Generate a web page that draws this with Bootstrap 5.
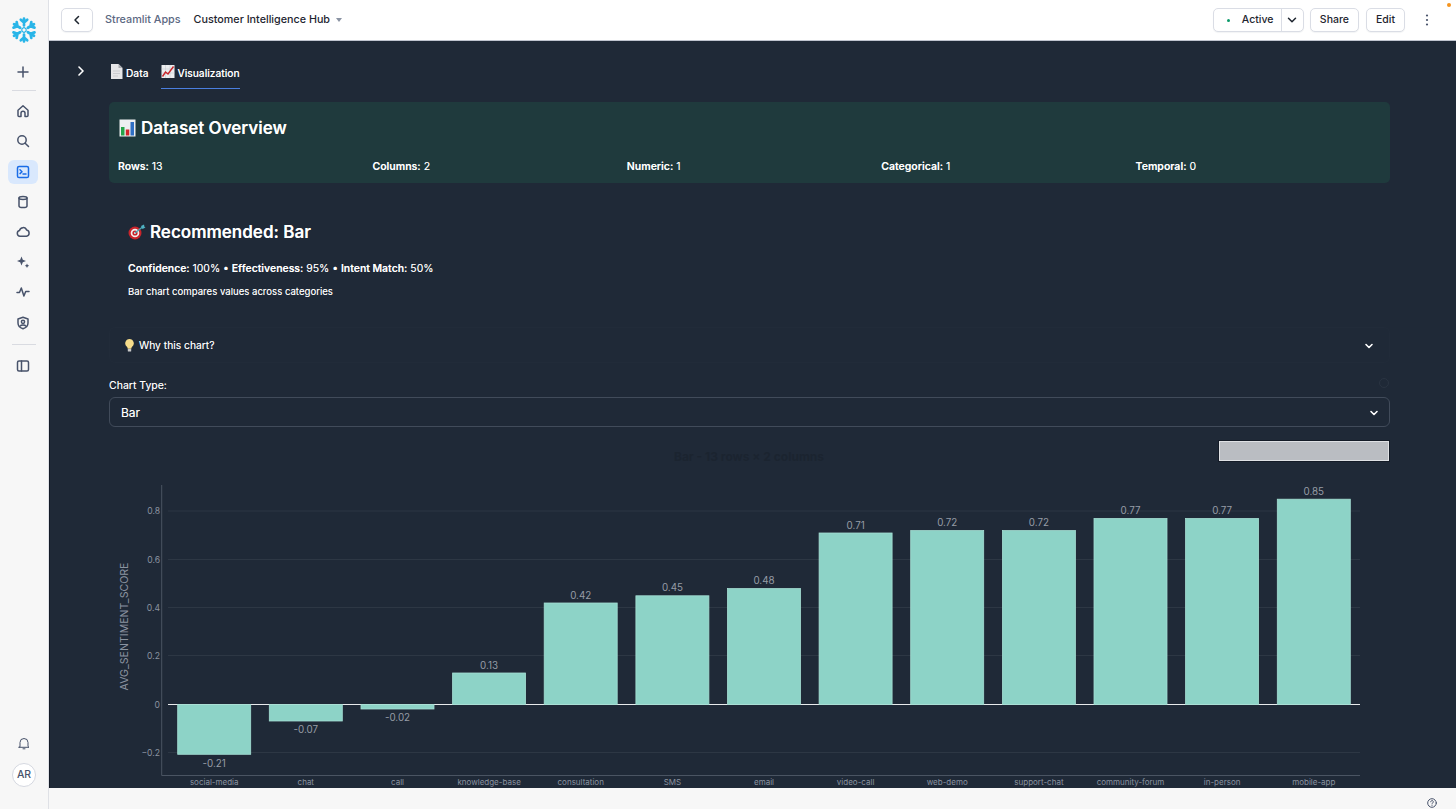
<!DOCTYPE html>
<html lang="en">
<head>
<meta charset="utf-8">
<title>Customer Intelligence Hub</title>
<link href="https://cdn.jsdelivr.net/npm/bootstrap@5.3.0/dist/css/bootstrap.min.css" rel="stylesheet">
<style>
html,body{height:100%;overflow:hidden}
body{font-family:Inter,"Liberation Sans",sans-serif;background:#f7f7f7;color:#1e252f}
.ic{fill:none;stroke:#48536b;stroke-width:1.5;stroke-linecap:round;stroke-linejoin:round;display:block}
.ic-w{stroke:#fff;stroke-width:1.6}
.ic-d{stroke:#1e252f}
.ic-thin{stroke-width:1}
.rail{width:49px;flex:none;background:#f7f7f7;border-right:1px solid #dfe1e6;height:809px;padding-top:17px}
.rail-logo{margin-bottom:17px}
.rail-btn{width:30px;height:24px;border-radius:6px;margin:0 2px 6.2px 0;display:flex;align-items:center;justify-content:center}
.rail-btn.on{background:#d9e8fd}
.rail-btn.on .ic{stroke:#1a6ce7}
.rail-rule{width:24px;height:1px;background:#d9dbe1;margin:0 0 8px}
.rail-rule.low{margin:3px 0 9px}
.avatar{width:24px;height:24px;border-radius:50%;border:1px solid #d5d8e0;background:#fff;color:#48536b;font-size:10.5px;font-weight:500;display:flex;align-items:center;justify-content:center;margin:13px 0 22px}
.topbar{height:41px;background:#fff;border-bottom:1px solid #bfc4cf;padding:0 19px 0 12px;position:relative}
.tb-btn{height:24px;border:1px solid #dadde5;border-radius:5px;background:#fff;font-size:10.5px;font-weight:500;color:#1e252f;padding:0 9px;display:flex;align-items:center;box-shadow:0 1px 1px rgba(20,30,50,.05)}
.tb-back{width:32px;justify-content:center;padding:0;margin-right:12px}
.crumb{font-size:10.8px;font-weight:500;color:#5b6882;margin-right:13px}
.crumb-now{font-size:10.75px;font-weight:500;color:#1e252f}
.caret{width:0;height:0;border-left:3.5px solid transparent;border-right:3.5px solid transparent;border-top:4px solid #8a93a3;margin-left:6px}
.grp{width:91px;padding:0;margin-right:6px}
.grp-a{width:68px;height:100%;border-right:1px solid #dadde5;display:flex;align-items:center;padding-left:13px}
.grp-dot{width:3px;height:3px;background:#0a9a6a;border-radius:50%;margin-right:12px}
.grp-b{flex:1;display:flex;align-items:center;justify-content:center}
.tb-share{margin-right:7px}
.tb-edit{margin-right:20px}
.orange{position:absolute;top:3px;right:5px;width:4px;height:4px;border-radius:50%;background:#f5941e}
.stage{height:747px;background:#1f2937;border-left:1px solid #141b27;overflow:hidden;color:#fff;padding-left:59px;position:relative;text-shadow:0 0 .4px rgba(255,255,255,.5)}
.stage-inner{width:1281px}
.expand{position:absolute;left:26px;top:25px}
.tabs-row{height:48px;padding-top:19px;gap:13px;font-size:10.2px;font-weight:500;margin-bottom:13px}
.tabx{height:29px;display:flex;align-items:flex-start;gap:3px;padding-top:6px;padding-left:1px}
.tabx.on{border-bottom:1px solid #4a7fe0;padding-left:0;gap:2px}
.tabx svg{margin-top:-2px}
.overview{height:81px;background:#1f3a3d;border-radius:5px;padding:15px 0 0 9px;margin-bottom:38px}
.h-big{font-size:17px;font-weight:600;line-height:22px;margin:0;display:flex;align-items:center;gap:5px}
.h-over{padding-left:1px}
.h-tight{gap:4px}
.stats{display:grid;grid-template-columns:repeat(5,254.4px);font-size:10.5px;margin-top:21px;line-height:13px}
.stats b,.metrics b{font-weight:600}
.reco{padding-left:19px;height:106px}
.metrics{font-size:10.4px;line-height:13px;margin:19px 0 0}
.why-note{font-size:9.6px;line-height:12px;margin:11px 0 0}
.why{height:36px;border:1px solid #212b39;border-radius:6px;padding:1px 15px 0;margin-bottom:16px;font-size:10.3px;font-weight:400}
.why-lab{gap:5px}
.lbl{font-size:10.5px;line-height:13px;margin-bottom:5px;position:relative}
.help-faint{position:absolute;right:1px;top:-1px;width:10px;height:10px;border:1px solid #2a3442;border-radius:50%}
.pick{height:30px;border:1px solid #414b5a;border-radius:6px;padding:1px 10px 0 11px;font-size:12px;margin-bottom:13px}
.chart-head{display:grid;grid-template-columns:1fr auto 1fr;grid-template-rows:22px;align-items:start;padding-right:1px}
.chart-title{font-size:12px;line-height:16px;font-weight:700;color:#1b2430;text-shadow:none;margin-top:9px}
.shot-btn{justify-self:end;width:170px;height:20px;margin-top:1px;background:#babdc2;border:1px solid #dfe1e4;box-shadow:0 0 0 1px #141b27}
.plot{display:block;position:relative;font-family:Inter,"Liberation Sans",sans-serif;text-shadow:none}
.plot .tk{font-size:8.6px;fill:#8b93a0;text-anchor:end}
.plot .xk{font-size:8px;fill:#8b93a0;text-anchor:middle}
.plot .dv{font-size:9.8px;fill:#969ca6;text-anchor:middle}
.plot .ttl{font-size:10.6px;fill:#8b93a0;text-anchor:middle}
.plot .gl{stroke:#2d3744;stroke-width:1}
.plot .br{fill:#8dd3c7;stroke:#a6dfd4;stroke-width:.8}
.foot{height:21px;background:#f7f7f7;position:relative}
.foot-help{position:absolute;right:19px;top:10px}
</style>
</head>
<body class="d-flex">
<aside class="rail d-flex flex-column align-items-center">
  <svg class="rail-logo" width="26" height="26" viewBox="-13 -13 26 26" fill="none" stroke="#29b5e8" stroke-width="2.700" stroke-linecap="round" stroke-linejoin="round">
    <g id="arm"><path d="M0-4.500V-11.500M-3.200-10.300 0-7.500 3.200-10.300"/></g>
    <use href="#arm" transform="rotate(60)"/><use href="#arm" transform="rotate(120)"/><use href="#arm" transform="rotate(180)"/><use href="#arm" transform="rotate(240)"/><use href="#arm" transform="rotate(300)"/>
    <path d="M0-2.400 2.100-1.200V1.200L0 2.400-2.100 1.200V-1.200Z" stroke-width="1.200"/>
  </svg>
  <div class="rail-btn"><svg class="ic" width="14" height="14" viewBox="0 0 14 14"><path d="M7 2v10M2 7h10"/></svg></div>
  <div class="rail-rule"></div>
  <div class="rail-btn"><svg class="ic" width="14" height="14" viewBox="0 0 14 14"><path d="M2 6.200 7 1.800l5 4.400v5.200a1 1 0 0 1-1 1H9V9.200a2 2 0 0 0-4 0v3.200H3a1 1 0 0 1-1-1Z"/></svg></div>
  <div class="rail-btn"><svg class="ic" width="14" height="14" viewBox="0 0 14 14"><circle cx="6" cy="6" r="4.200"/><path d="m9.200 9.200 3.300 3.300"/></svg></div>
  <div class="rail-btn on"><svg class="ic" width="14" height="14" viewBox="0 0 14 14"><rect x="1.500" y="1.500" width="11" height="11" rx="1.600"/><path d="m4 4.800 2 1.900-2 1.900M7 9h3"/></svg></div>
  <div class="rail-btn"><svg class="ic" width="14" height="14" viewBox="0 0 14 14"><ellipse cx="7" cy="3" rx="4" ry="1.500"/><path d="M3 3v8c0 .9 1.800 1.600 4 1.600s4-.7 4-1.600V3"/></svg></div>
  <div class="rail-btn"><svg class="ic" width="14" height="14" viewBox="0 0 14 14"><path d="M4 11.200a2.900 2.900 0 0 1-.5-5.700 3.700 3.700 0 0 1 7.100-.4 3.100 3.100 0 0 1-.1 6.100Z"/></svg></div>
  <div class="rail-btn"><svg width="14" height="14" viewBox="0 0 14 14" fill="#48536b"><path d="M5.500 1.500 6.800 4.800 10 6 6.800 7.300 5.500 10.500 4.200 7.300 1 6 4.200 4.800ZM11 8.500l.7 1.600 1.500.7-1.500.6-.7 1.600-.7-1.600-1.500-.6 1.500-.7Z"/></svg></div>
  <div class="rail-btn"><svg class="ic" width="14" height="14" viewBox="0 0 14 14"><path d="M1 7.500h2.500L5.300 3l2.600 8 1.800-4.500H13"/></svg></div>
  <div class="rail-btn"><svg class="ic" width="14" height="14" viewBox="0 0 14 14"><path d="M7 1.300 12 3v4c0 3-2.200 4.800-5 5.700C4.200 11.800 2 10 2 7V3Z"/><circle cx="7" cy="5.800" r="1.600"/><path d="M4.300 10c.6-1.200 4.800-1.200 5.400 0"/></svg></div>
  <div class="rail-rule low"></div>
  <div class="rail-btn"><svg class="ic" width="14" height="14" viewBox="0 0 14 14"><rect x="1.500" y="2" width="11" height="10" rx="1.500"/><path d="M5.500 2v10"/></svg></div>
  <div class="mt-auto d-flex flex-column align-items-center">
    <svg class="ic ic-thin" width="14" height="14" viewBox="0 0 14 14"><path d="M3 10.500V6.500a4 4 0 0 1 8 0v4l1 .8H2ZM6 12.800h2"/></svg>
    <div class="avatar">AR</div>
  </div>
</aside>
<div class="flex-grow-1 d-flex flex-column min-w-0">
  <header class="topbar d-flex align-items-center">
    <span class="tb-btn tb-back"><svg class="ic ic-d" width="10" height="10" viewBox="0 0 10 10"><path d="M6.500 1.500 3 5l3.500 3.500"/></svg></span>
    <span class="crumb">Streamlit Apps</span>
    <span class="crumb-now">Customer Intelligence Hub</span>
    <span class="caret"></span>
    <div class="ms-auto d-flex align-items-center">
      <div class="tb-btn grp"><span class="grp-a"><span class="grp-dot"></span>Active</span><span class="grp-b"><svg class="ic ic-d" width="10" height="10" viewBox="0 0 10 10"><path d="M1.500 3.200 5 6.700l3.500-3.500"/></svg></span></div>
      <span class="tb-btn tb-share">Share</span>
      <span class="tb-btn tb-edit">Edit</span>
      <svg width="4" height="12" viewBox="0 0 4 12" fill="#48536b"><circle cx="2" cy="1.500" r="1.100"/><circle cx="2" cy="6" r="1.100"/><circle cx="2" cy="10.500" r="1.100"/></svg>
      <span class="ms-2"></span>
    </div>
    <span class="orange"></span>
  </header>
  <main class="stage">
    <svg class="ic ic-w expand" width="10" height="10" viewBox="0 0 10 10"><path d="M3 1 7 5 3 9"/></svg>
    <div class="stage-inner">
      <div class="tabs-row d-flex">
        <div class="tabx">
          <svg width="13" height="15" viewBox="0 0 13 15"><path d="M1 0h7.500L12.500 4v11H1Z" fill="#e6e6e8"/><path d="M8.500 0v4h4Z" fill="#a9abb0"/><path d="M3 7h7M3 9.500h7M3 12h5" stroke="#c5c6ca" stroke-width=".8"/></svg>
          <span>Data</span>
        </div>
        <div class="tabx on">
          <svg width="14" height="15" viewBox="0 0 14 15"><rect x=".5" y="1" width="13" height="13" fill="#eceef0"/><path d="M.5 5h13M.5 9h13M4.500 1v13M9 1v13" stroke="#c2c6cc" stroke-width=".5"/><path d="M1.500 12.500 4.500 8l2.500 2 5.500-7.500" fill="none" stroke="#c8262b" stroke-width="1.400"/></svg>
          <span>Visualization</span>
        </div>
      </div>
      <section class="overview">
        <h2 class="h-big h-over">
          <svg width="17" height="18" viewBox="0 0 17 18"><rect x=".5" y=".5" width="16" height="17" fill="#eef0f2"/><rect x="2" y="8" width="3.500" height="8.500" fill="#26a34a"/><rect x="6.800" y="10.500" width="3.500" height="6" fill="#d3252b"/><rect x="11.500" y="3" width="3.500" height="13.500" fill="#2f6fc4"/></svg>
          <span>Dataset Overview</span>
        </h2>
        <div class="stats">
          <div><b>Rows:</b> 13</div><div><b>Columns:</b> 2</div><div><b>Numeric:</b> 1</div><div><b>Categorical:</b> 1</div><div><b>Temporal:</b> 0</div>
        </div>
      </section>
      <section class="reco">
        <h2 class="h-big h-tight">
          <svg width="18" height="16" viewBox="0 0 18 16"><circle cx="7" cy="9" r="6.500" fill="#c9242b"/><circle cx="7" cy="9" r="4.300" fill="#f4f0ee"/><circle cx="7" cy="9" r="2.600" fill="#c9242b"/><circle cx="7" cy="9" r="1" fill="#f4f0ee"/><path d="M7 9 14.500 3" stroke="#4aa6b5" stroke-width="1.500"/><path d="m13 2 3-1.500 .5 2.500 1 .5-3 1.500Z" fill="#4fb3c4"/></svg>
          <span>Recommended: Bar</span>
        </h2>
        <p class="metrics"><b>Confidence:</b> 100% • <b>Effectiveness:</b> 95% • <b>Intent Match:</b> 50%</p>
        <p class="why-note">Bar chart compares values across categories</p>
      </section>
      <div class="why d-flex align-items-center justify-content-between">
        <span class="d-flex align-items-center why-lab">
          <svg width="9" height="13" viewBox="0 0 9 13"><path d="M4.500 0a4.300 4.300 0 0 1 2.600 7.700c-.6.600-.8 1.300-.8 2H2.700c0-.7-.2-1.400-.8-2A4.300 4.300 0 0 1 4.500 0Z" fill="#f6dc8a"/><rect x="2.800" y="10" width="3.400" height="2.600" rx=".6" fill="#c9c9c9"/></svg>
          <span>Why this chart?</span>
        </span>
        <svg class="ic ic-w" width="10" height="10" viewBox="0 0 10 10"><path d="M2 3.500 5 6.500l3-3"/></svg>
      </div>
      <div class="lbl">Chart Type:<span class="help-faint"></span></div>
      <div class="pick d-flex align-items-center justify-content-between">
        <span>Bar</span>
        <svg class="ic ic-w" width="10" height="10" viewBox="0 0 10 10"><path d="M2 3.500 5 6.500l3-3"/></svg>
      </div>
      <div class="chart-head">
        <span></span>
        <span class="chart-title">Bar - 13 rows × 2 columns</span>
        <span class="shot-btn"></span>
      </div>
      <svg class="plot" width="1281" height="326" viewBox="109 462 1281 326">
        <path class="gl" d="M168 511H1360M168 559.500H1360M168 607.500H1360M168 655.500H1360M168 752.500H1360"/>
        <path d="M161.700 485V775.500H1360" fill="none" stroke="#4a5462" stroke-width="1"/>
        <path d="M168 704.500H1360" stroke="#e8eaec" stroke-width="1"/>
        <text class="tk" x="160" y="514">0.8</text><text class="tk" x="160" y="562.500">0.6</text><text class="tk" x="160" y="610.500">0.4</text><text class="tk" x="160" y="659">0.2</text><text class="tk" x="160" y="707.500">0</text><text class="tk" x="160" y="755.500">−0.2</text>
        <text class="ttl" transform="translate(128 626.500) rotate(-90)">AVG_SENTIMENT_SCORE</text>
        <rect class="br" x="177.700" y="704.500" width="73" height="49.800"/>
        <rect class="br" x="269.300" y="704.500" width="73" height="16.500"/>
        <rect class="br" x="361" y="704.500" width="73" height="4.500"/>
        <rect class="br" x="452.600" y="673" width="73" height="31.500"/>
        <rect class="br" x="544.200" y="603" width="73" height="101.500"/>
        <rect class="br" x="635.900" y="595.800" width="73" height="108.700"/>
        <rect class="br" x="727.500" y="588.600" width="73" height="115.900"/>
        <rect class="br" x="819.100" y="533" width="73" height="171.500"/>
        <rect class="br" x="910.700" y="530.600" width="73" height="173.900"/>
        <rect class="br" x="1002.400" y="530.600" width="73" height="173.900"/>
        <rect class="br" x="1094" y="518.500" width="73" height="186"/>
        <rect class="br" x="1185.600" y="518.500" width="73" height="186"/>
        <rect class="br" x="1277.300" y="499.200" width="73" height="205.300"/>
        <text class="dv" x="214.200" y="766.500">-0.21</text><text class="dv" x="305.800" y="733">-0.07</text><text class="dv" x="397.500" y="721">-0.02</text><text class="dv" x="489.100" y="668.500">0.13</text><text class="dv" x="580.700" y="598.500">0.42</text><text class="dv" x="672.400" y="591.300">0.45</text><text class="dv" x="764" y="584">0.48</text><text class="dv" x="855.600" y="528.500">0.71</text><text class="dv" x="947.200" y="526">0.72</text><text class="dv" x="1038.900" y="526">0.72</text><text class="dv" x="1130.500" y="514">0.77</text><text class="dv" x="1222.100" y="514">0.77</text><text class="dv" x="1313.800" y="495">0.85</text>
        <text class="xk" x="214.200" y="785">social-media</text><text class="xk" x="305.800" y="785">chat</text><text class="xk" x="397.500" y="785">call</text><text class="xk" x="489.100" y="785">knowledge-base</text><text class="xk" x="580.700" y="785">consultation</text><text class="xk" x="672.400" y="785">SMS</text><text class="xk" x="764" y="785">email</text><text class="xk" x="855.600" y="785">video-call</text><text class="xk" x="947.200" y="785">web-demo</text><text class="xk" x="1038.900" y="785">support-chat</text><text class="xk" x="1130.500" y="785">community-forum</text><text class="xk" x="1222.100" y="785">in-person</text><text class="xk" x="1313.800" y="785">mobile-app</text>
      </svg>
    </div>
  </main>
  <footer class="foot">
    <svg class="ic ic-thin foot-help" width="10" height="10" viewBox="0 0 10 10"><circle cx="5" cy="5" r="4.300"/><path d="M3.700 3.800a1.300 1.300 0 1 1 2 1.100c-.5.300-.7.500-.7 1M5 7.300v.1"/></svg>
  </footer>
</div>
</body>
</html>
